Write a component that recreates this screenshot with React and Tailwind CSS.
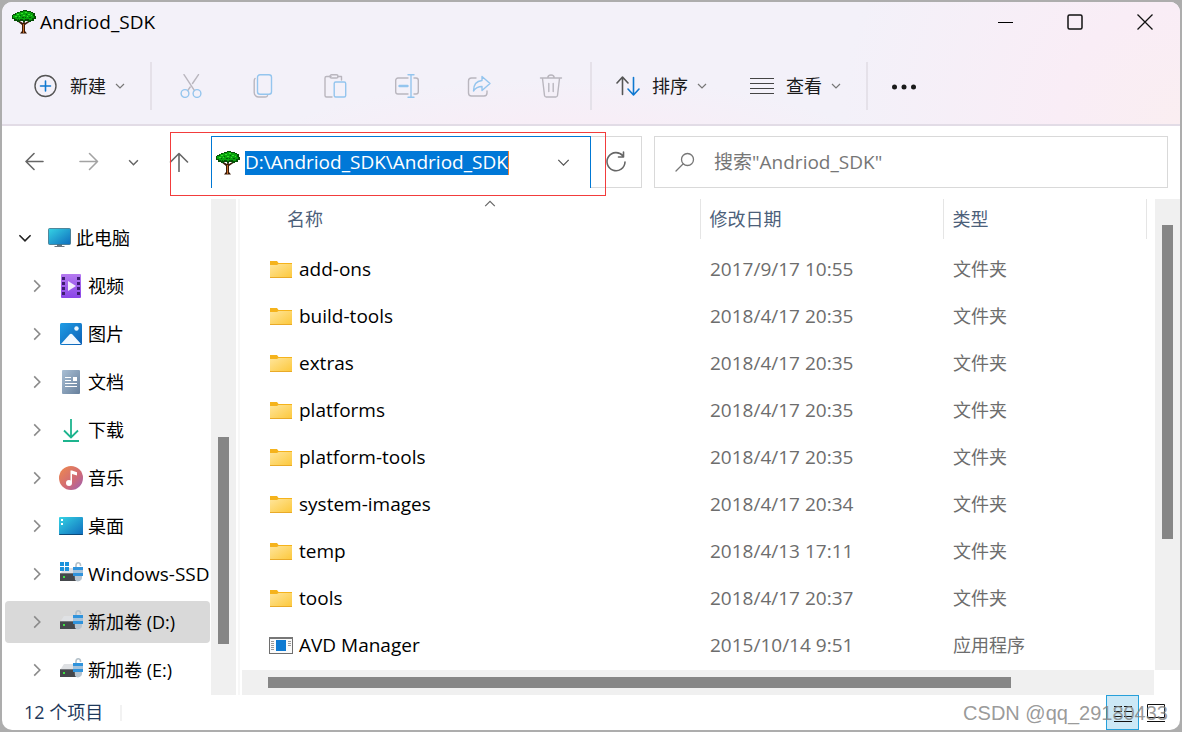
import React, { useState } from 'react'

const tree = [
    { name: '视频', icon: VideoIcon },
    { name: '图片', icon: PictureIcon },
    { name: '文档', icon: DocumentIcon },
    { name: '下载', icon: DownloadIcon },
    { name: '音乐', icon: MusicIcon },
    { name: '桌面', icon: DesktopIcon },
    { name: 'Windows-SSD', icon: SystemDriveIcon, latin: true },
    { name: '新加卷 (D:)', icon: DriveIcon },
    { name: '新加卷 (E:)', icon: DriveIcon },
]

const files = [
    { name: 'add-ons', date: '2017/9/17 10:55', type: '文件夹' },
    { name: 'build-tools', date: '2018/4/17 20:35', type: '文件夹' },
    { name: 'extras', date: '2018/4/17 20:35', type: '文件夹' },
    { name: 'platforms', date: '2018/4/17 20:35', type: '文件夹' },
    { name: 'platform-tools', date: '2018/4/17 20:35', type: '文件夹' },
    { name: 'system-images', date: '2018/4/17 20:34', type: '文件夹' },
    { name: 'temp', date: '2018/4/13 17:11', type: '文件夹' },
    { name: 'tools', date: '2018/4/17 20:37', type: '文件夹' },
    { name: 'AVD Manager', date: '2015/10/14 9:51', type: '应用程序' },
]

/* ---------- Icons ---------- */

function TreeLogo() {
    return (
        <svg width="24" height="24" viewBox="0 0 24 24" className="shrink-0" aria-hidden="true">
            <path d="M5 11l5 4v6l-2 2.5h7L13 21v-6l6-4-1-1-5 3-1-3-1 3-5-3z" fill="#3a1a08" />
            <path d="M11 14h1v9h-1z" fill="#c06a28" />
            <path d="M3 3h2V2h3V1h3V0h4v1h4v1h2v1h2v3h1v3h-2v2h-3v1h-3v-1h-3v1h-2v-1H8v1H5v-1H2V9H0V5h1V4h2z" fill="#054f05" />
            <path d="M4 3h3V2h4V1h4v1h4v1h2v3h1v2h-2v2h-3v-1h-4v1h-2V9H8v1H5V9H3V8H1V5h3z" fill="#07a30c" />
            <path d="M5 4h2v1H5zM9 3h2v1H9zM13 2h2v1h-2zM16 4h2v1h-2zM11 5h2v1h-2zM7 6h1v1H7zM3 6h2v1H3zM15 6h1v1h-1zM19 5h1v1h-1z" fill="#35e02a" />
            <path d="M8 5h1v1H8zM14 4h1v1h-1zM5 7h1v1H5zM10 7h2v1h-2zM13 7h1v1h-1zM17 7h2v1h-2zM20 8h1v1h-1zM6 9h1v1H6zM14 9h1v1h-1z" fill="#045a06" />
        </svg>
    )
}

function Chevron({ size = 10, dir = 'down', color = '#555', width = 1.3 }) {
    const paths = {
        down: 'M1 3l4 4 4-4',
        up: 'M1 6l4-4 4 4',
        right: 'M3 1l4 4-4 4',
    }
    return (
        <svg width={size} height={size} viewBox="0 0 10 10" fill="none" stroke={color} strokeWidth={width * 10 / size} className="shrink-0" aria-hidden="true">
            <path d={paths[dir]} />
        </svg>
    )
}

function Line({ children, size = 24, color = '#b9b6be', width = 1.4 }) {
    return (
        <svg width={size} height={size} viewBox={`0 0 ${size} ${size}`} fill="none" stroke={color} strokeWidth={width} strokeLinecap="round" strokeLinejoin="round" className="shrink-0" aria-hidden="true">
            {children}
        </svg>
    )
}

function CutIcon() {
    return (
        <Line>
            <path d="M5 0.700l10.500 16M19.500 0.700L13.500 9.500M11.200 13l-2.500 3.700" />
            <circle cx="6" cy="19.500" r="3.900" stroke="#94c5ee" />
            <circle cx="18" cy="19.500" r="3.900" stroke="#94c5ee" />
        </Line>
    )
}

function CopyIcon() {
    return (
        <Line>
            <path d="M4 4.500C3.400 5 3.200 6 3.200 7v11.500a4.500 4.500 0 0 0 4.500 4.500h6.500c1.200 0 2-.5 2.300-1.300" />
            <rect x="6.500" y="0.700" width="14" height="19.500" rx="2.500" stroke="#94c5ee" />
        </Line>
    )
}

function PasteIcon() {
    return (
        <Line>
            <path d="M8 2.500H3.500A1.500 1.500 0 0 0 2 4v17.500A1.500 1.500 0 0 0 3.500 23H9M15 2.500h3.500V6" />
            <rect x="7" y="0.700" width="8" height="3.300" rx="1.600" />
            <rect x="11.200" y="8" width="11.500" height="15" rx="1.500" stroke="#94c5ee" />
        </Line>
    )
}

function RenameIcon() {
    return (
        <Line>
            <path d="M13 4H3a2.300 2.300 0 0 0-2.300 2.300v11.400A2.300 2.300 0 0 0 3 20h10M19 4h2a2.300 2.300 0 0 1 2.300 2.300v11.400A2.300 2.300 0 0 1 21 20h-2" />
            <path d="M13 0.700h6M13 23.300h6M16 1v22" stroke="#94c5ee" />
            <path d="M4.500 12h8" stroke="#94c5ee" strokeWidth="2.400" />
        </Line>
    )
}

function ShareIcon() {
    return (
        <Line>
            <path d="M9 4H4.500A3 3 0 0 0 1.500 7v12a3 3 0 0 0 3 3H17a3 3 0 0 0 3-3v-2" />
            <path d="M15 2.500l8 7-8 7v-4c-4 0-6.500 1.500-8.500 4.500 0-6 3-10 8.500-10.500z" stroke="#94c5ee" />
        </Line>
    )
}

function TrashIcon() {
    return (
        <Line>
            <path d="M1.500 4h21M3.500 4.500l2 17A1.800 1.800 0 0 0 7.300 23h9.400a1.800 1.800 0 0 0 1.800-1.500l2-17M8.800 4c0-4 6.400-4 6.400 0M9.800 9.500v8M14.200 9.500v8" />
        </Line>
    )
}

const toolIcons = [
    ['剪切', CutIcon],
    ['复制', CopyIcon],
    ['粘贴', PasteIcon],
    ['重命名', RenameIcon],
    ['共享', ShareIcon],
    ['删除', TrashIcon],
]

function ComputerIcon() {
    return (
        <svg width="24" height="24" viewBox="0 0 24 24" className="shrink-0" aria-hidden="true">
            <defs>
                <linearGradient id="screen" x1="0" y1="0" x2="1" y2="1">
                    <stop offset="0" stopColor="#35d3e4" />
                    <stop offset="1" stopColor="#0f6cbd" />
                </linearGradient>
            </defs>
            <path d="M9 18h5v2H9zM6.500 20h10v1h-10z" fill="#6a7680" />
            <rect x="0.500" y="2.500" width="22" height="16" rx="1" fill="url(#screen)" stroke="#3c7186" strokeWidth="0.800" />
        </svg>
    )
}

function VideoIcon() {
    const holes = [3, 8, 13, 18]
    return (
        <svg width="24" height="24" viewBox="0 0 24 24" className="shrink-0" aria-hidden="true">
            <defs>
                <linearGradient id="film" x1="0" y1="0" x2="0" y2="1">
                    <stop offset="0" stopColor="#b57af0" />
                    <stop offset="1" stopColor="#8a45e8" />
                </linearGradient>
            </defs>
            <rect x="2" width="20" height="24" rx="1" fill="url(#film)" />
            {holes.map((y) => (
                <path key={y} d={`M3 ${y}h3v3H3zM18 ${y}h3v3h-3z`} fill="#3f1d73" />
            ))}
            <path d="M9 7l8 5-8 5z" fill="#f4eefc" />
        </svg>
    )
}

function PictureIcon() {
    return (
        <svg width="24" height="24" viewBox="0 0 24 24" className="shrink-0" aria-hidden="true">
            <defs>
                <linearGradient id="photo" x1="0" y1="0" x2="1" y2="1">
                    <stop offset="0" stopColor="#1f9de6" />
                    <stop offset="1" stopColor="#0c5fb4" />
                </linearGradient>
            </defs>
            <rect x="1" y="1" width="22" height="22" rx="1.500" fill="url(#photo)" />
            <path d="M2 22l8.500-9.500a2 2 0 0 1 3 0L22 22z" fill="#f1f8ff" />
            <circle cx="17.500" cy="6.500" r="2.200" fill="#e8f6ff" />
        </svg>
    )
}

function DocumentIcon() {
    return (
        <svg width="24" height="24" viewBox="0 0 24 24" className="shrink-0" aria-hidden="true">
            <defs>
                <linearGradient id="paper" x1="0" y1="0" x2="1" y2="1">
                    <stop offset="0" stopColor="#a9bfd4" />
                    <stop offset="1" stopColor="#67809c" />
                </linearGradient>
            </defs>
            <rect x="3" width="18" height="24" rx="1" fill="url(#paper)" />
            <path d="M6 7h6v1H6zM6 10h6v1H6zM6 13h12v1H6zM6 16h12v1H6zM14 7h4v4h-4z" fill="#fff" />
        </svg>
    )
}

function DownloadIcon() {
    return (
        <svg width="24" height="24" viewBox="0 0 24 24" fill="none" stroke="#1db48e" strokeWidth="1.800" className="shrink-0" aria-hidden="true">
            <path d="M12 1v19M5 12.500l7 7 7-7M4 23h16" />
        </svg>
    )
}

function MusicIcon() {
    return (
        <svg width="24" height="24" viewBox="0 0 24 24" className="shrink-0" aria-hidden="true">
            <defs>
                <linearGradient id="disc" x1="0" y1="0" x2="1" y2="1">
                    <stop offset="0" stopColor="#f08a4b" />
                    <stop offset="0.600" stopColor="#cf6a78" />
                    <stop offset="1" stopColor="#9a60b8" />
                </linearGradient>
            </defs>
            <circle cx="12" cy="12" r="12" fill="url(#disc)" />
            <circle cx="10" cy="17" r="3" fill="#fff" />
            <path d="M11.500 4.500h1.500l5 1.800v3.200l-5-1.500v9h-1.500z" fill="#fff" />
        </svg>
    )
}

function DesktopIcon() {
    return (
        <svg width="24" height="24" viewBox="0 0 24 24" className="shrink-0" aria-hidden="true">
            <rect x="0" y="3" width="24" height="18" rx="1" fill="url(#screen)" />
            <path d="M0 20h24a1 1 0 0 1-1 1H1a1 1 0 0 1-1-1z" fill="#0b4a7a" />
            <path d="M2 5h2v2H2zM2 9h2v2H2z" fill="#fff" />
        </svg>
    )
}

function DriveIcon({ system }) {
    return (
        <svg width="24" height="24" viewBox="0 0 24 24" className="shrink-0" aria-hidden="true">
            <path d="M5 6h12l3 6H1z" fill="#dfe1e4" />
            <path d="M1 11h18v8H1z" fill="#44474b" />
            <path d="M1 11h18v1H1z" fill="#74777b" />
            <rect x="4" y="14" width="2" height="2" fill="#3ee043" />
            {system && <path d="M1 0h4v4H1zM6 0h4v4H6zM1 5h4v4H1zM6 5h4v4H6z" fill="#1b93dc" />}
            <path d="M17 6V3.500c0-3.500 4.500-3.500 4.500-.5v1" fill="none" stroke="#b4c0c9" strokeWidth="1.600" />
            <path d="M15 5h8v10a4 4 0 0 1-7 3z" fill="#b7c4cf" />
            <path d="M14 5h10v3H14zM14 11h10v3H14z" fill="#2f93dc" />
            <path d="M14 8h10v3H14z" fill="#a5c3dc" />
        </svg>
    )
}

function SystemDriveIcon() {
    return <DriveIcon system />
}

function FolderIcon() {
    return (
        <svg width="24" height="24" viewBox="0 1 24 24" className="shrink-0" aria-hidden="true">
            <defs>
                <linearGradient id="folder" x1="0" y1="0" x2="1" y2="1">
                    <stop offset="0" stopColor="#ffe59a" />
                    <stop offset="1" stopColor="#fcc83c" />
                </linearGradient>
            </defs>
            <path d="M1 4h7l1.500 2H23v4H1z" fill="#f5b31c" />
            <path d="M1 8h7l1.500-1H23v13.500H1z" fill="url(#folder)" />
            <path d="M1 20h22v1H1z" fill="#e9aa28" />
        </svg>
    )
}

function AppIcon() {
    return (
        <svg width="24" height="24" viewBox="0 1 24 24" className="shrink-0" aria-hidden="true">
            <rect x="0.500" y="4.500" width="23" height="16" fill="#fafafa" stroke="#6e6e6e" />
            <path d="M0 4h24v2H0z" fill="#777" />
            <path d="M7 7h10v11H7z" fill="#0f7ad1" />
            <path d="M2 8h3v1H2zM2 10h3v1H2zM2 12h3v1H2zM2 14h3v1H2zM2 16h3v1H2zM19 8h3v1h-3zM19 10h3v1h-3zM19 12h3v1h-3z" fill="#999" />
        </svg>
    )
}

/* ---------- Sections ---------- */

function TitleBar() {
    return (
        <div className="flex h-10 items-center pl-[10px]">
            <TreeLogo />
            <h1 className="ml-1 text-[19px] text-black">Andriod_SDK</h1>
            <div className="ml-auto flex h-full">
                <button aria-label="最小化" className="flex w-[70px] items-center justify-center">
                    <svg width="16" height="16" viewBox="0 0 16 16"><path d="M1 8h15v1H1z" fill="#000" /></svg>
                </button>
                <button aria-label="最大化" className="flex w-[70px] items-center justify-center">
                    <svg width="16" height="16" viewBox="0 0 16 16" fill="none"><rect x="1" y="1" width="14" height="14" rx="1.500" stroke="#111" strokeWidth="1.500" /></svg>
                </button>
                <button aria-label="关闭" className="flex w-[70px] items-center justify-center">
                    <svg width="16" height="16" viewBox="0 0 16 16"><path d="M0.500 0.500l15 15M15.500 0.500l-15 15" stroke="#111" strokeWidth="1.300" /></svg>
                </button>
            </div>
        </div>
    )
}

function Divider() {
    return <div className="h-12 w-[2px] shrink-0 bg-[#e5e1e9]" />
}

function MenuButton({ label, icon }) {
    return (
        <button className="flex w-[91px] shrink-0 items-center">
            {icon}
            <span className="ml-3 text-[18px] text-[#1a1a1a]">{label}</span>
            <span className="ml-auto"><Chevron color="#777" width={1.2} /></span>
        </button>
    )
}

function Toolbar() {
    return (
        <div className="flex h-[82px] items-center pt-[6px] pl-8">
            <MenuButton
                label="新建"
                icon={
                    <Line color="#555">
                        <circle cx="11.500" cy="12" r="10.500" />
                        <path d="M11.500 7v10M6.500 12h10" stroke="#0f78d0" strokeWidth="1.600" />
                    </Line>
                }
            />
            <div className="ml-[25px]"><Divider /></div>
            <div className="mx-[3px] flex">
                {toolIcons.map(([label, Icon]) => (
                    <button key={label} aria-label={label} className="flex h-12 w-[72px] items-center justify-center">
                        <Icon />
                    </button>
                ))}
            </div>
            <Divider />
            <div className="ml-6 flex">
                <MenuButton
                    label="排序"
                    icon={
                        <Line color="#555" width={1.600}>
                            <path d="M6.500 20.500V3.500M1 9l5.500-6L12 9" />
                            <path d="M17.500 3.500v17M12 15l5.500 6 5.500-6" stroke="#0f78d0" />
                        </Line>
                    }
                />
            </div>
            <div className="ml-[43px] flex">
                <MenuButton
                    label="查看"
                    icon={
                        <svg width="24" height="24" viewBox="0 0 24 24" className="shrink-0">
                            <path d="M0 4h24v1H0zM0 9h24v1H0zM0 14h24v1H0zM0 19h24v1H0z" fill="#444" />
                        </svg>
                    }
                />
            </div>
            <div className="ml-[25px]"><Divider /></div>
            <button aria-label="更多" className="ml-6">
                <svg width="24" height="24" viewBox="0 0 24 24" fill="#1a1a1a">
                    <circle cx="2.500" cy="13" r="2.500" />
                    <circle cx="12" cy="13" r="2.500" />
                    <circle cx="21.500" cy="13" r="2.500" />
                </svg>
            </button>
        </div>
    )
}

function AddressRow() {
    const [path, setPath] = useState('D:\\Andriod_SDK\\Andriod_SDK')
    return (
        <div className="flex pt-[10px] pr-3 pb-[11px] pl-[6px]">
            <button aria-label="后退" className="flex w-[54px] items-center justify-center">
                <Line size={20} color="#666" width={1.600}><path d="M18 9.500H1M9 1.500l-8 8 8 8" /></Line>
            </button>
            <button aria-label="前进" className="flex w-[54px] items-center justify-center">
                <Line size={20} color="#a3a3a3" width={1.600}><path d="M1 9.500h17.500M10.500 1.500l8 8-8 8" /></Line>
            </button>
            <button aria-label="最近浏览的位置" className="flex w-[34px] items-center justify-center">
                <Chevron size={11} color="#666" width={1.500} />
            </button>

            {/* Highlighted part of the row: up button and path */}
            <div className="relative flex h-[52px] flex-1">
                <button aria-label="向上" className="flex w-[58px] shrink-0 items-center justify-center">
                    <Line size={20} color="#666" width={1.600}><path d="M10 19.500V1.500M1.500 10L10 1.500l8.500 8.500" /></Line>
                </button>
                <div className="ml-[3px] flex flex-1 items-center border-x border-t border-[#0078d4] pr-5 pl-1">
                    <TreeLogo />
                    <input
                        aria-label="地址"
                        value={path}
                        onChange={(e) => setPath(e.target.value)}
                        className="ml-[5px] h-6 field-sizing-content border-r border-[#f08030] bg-[#0078d7] text-[19px] text-white outline-none"
                    />
                    <button aria-label="以前的位置" className="ml-auto">
                        <Chevron size={13} color="#555" />
                    </button>
                </div>
                <button aria-label="刷新" className="flex w-[51px] shrink-0 items-center justify-center border-y border-r border-[#d9d9d9]">
                    <Line size={22} color="#666" width={1.600}><path d="M18 5A9 9 0 1 0 20 11M18.500 1v5h-5" /></Line>
                </button>
                <div className="pointer-events-none absolute -top-1 right-9 -bottom-2 left-5 border border-[#f23c3c]" />
            </div>

            <div className="ml-3 flex flex-1 items-center border border-[#d9d9d9] pl-5">
                <Line size={20} color="#777" width={1.300}><circle cx="12.500" cy="7.500" r="6" /><path d="M8 12l-7 7" /></Line>
                <input
                    type="search"
                    aria-label="搜索"
                    placeholder={'搜索"Andriod_SDK"'}
                    className="ml-[19px] min-w-0 flex-1 text-[19px] outline-none placeholder:text-[#767676]"
                />
            </div>
        </div>
    )
}

function Sidebar() {
    return (
        <div className="flex w-[234px] shrink-0">
            <nav className="flex min-w-0 flex-1 flex-col gap-[6px] pt-[18px]">
                <button className="flex h-[42px] items-center pl-4 text-[18px] whitespace-nowrap">
                    <Chevron size={14} color="#222" width={1.600} />
                    <span className="mr-1 ml-4"><ComputerIcon /></span>
                    此电脑
                </button>
                {tree.map(({ name, icon: Icon, latin }) => (
                    <button
                        key={name}
                        className={`mr-px ml-[3px] flex h-[42px] items-center rounded-sm pl-[25px] whitespace-nowrap ${latin ? 'text-[19px]' : 'text-[18px]'} ${name === '新加卷 (D:)' ? 'bg-[#d9d9d9]' : ''}`}
                    >
                        <Chevron size={14} dir="right" color="#8a8a8a" width={1.600} />
                        <span className="mr-[5px] ml-[15px]"><Icon /></span>
                        {name}
                    </button>
                ))}
            </nav>
            <div className="w-[25px] shrink-0 bg-[#f0f0f0]">
                <div className="mt-[238px] ml-[7px] h-[207px] w-[11px] bg-[#868686]" />
            </div>
        </div>
    )
}

function FileList() {
    return (
        <div className="ml-[2px] flex min-w-0 flex-1 flex-col border-l-2 border-[#f7f7f7]">
            <div className="flex flex-1">
                <table className="ml-[2px] flex-1 table-fixed self-start text-left">
                    <colgroup>
                        <col />
                        <col className="w-[243px]" />
                        <col className="w-[203px]" />
                        <col className="w-[9px]" />
                    </colgroup>
                    <thead>
                        <tr className="h-10 text-[18px] text-[#4c607a]">
                            <th className="relative border-r border-[#e5e5e5] pl-[45px] font-normal">
                                名称
                                <span className="absolute inset-x-0 top-0 flex justify-center pl-[38px]"><Chevron size={12} dir="up" color="#666" width={1.200} /></span>
                            </th>
                            <th className="border-r border-[#e5e5e5] pl-[9px] font-normal">修改日期</th>
                            <th className="border-r border-[#e5e5e5] pl-[9px] font-normal">类型</th>
                            <th aria-hidden="true" />
                        </tr>
                    </thead>
                    <tbody>
                        <tr aria-hidden="true" className="h-[7px]"><td colSpan={4} /></tr>
                        {files.map((file) => (
                            <tr key={file.name} className="h-[47px] text-[#6d6d6d]">
                                <td className="pl-[27px] text-[19px] text-black">
                                    <div className="flex items-center gap-[6px]">
                                        {file.type === '文件夹' ? <FolderIcon /> : <AppIcon />}
                                        {file.name}
                                    </div>
                                </td>
                                <td className="pl-[10px] text-[19px]">{file.date}</td>
                                <td className="pl-[10px] text-[18px]">{file.type}</td>
                                <td />
                            </tr>
                        ))}
                    </tbody>
                </table>
                <div className="w-[25px] shrink-0 bg-[#f0f0f0]">
                    <div className="mt-[26px] ml-[7px] h-[314px] w-[11px] bg-[#868686]" />
                </div>
            </div>
            <div className="mr-[26px] ml-[2px] h-[25px] bg-[#f0f0f0] pt-[7px] pr-[143px] pl-[26px]">
                <div className="h-[11px] bg-[#868686]" />
            </div>
        </div>
    )
}

function StatusBar() {
    return (
        <div className="relative flex h-[35px] items-center pl-[22px]">
            <span className="text-[18px] text-[#1e395b]">12 个项目</span>
            <div className="ml-[17px] h-4 w-[2px] bg-[#f2f2f2]" />
            <button aria-label="详细信息" className="ml-auto flex h-full w-[33px] items-center justify-center border border-[#26a0da] bg-[#cce8f6]">
                <svg width="18" height="18" viewBox="0 0 18 18"><path d="M0 2h8v1H0zM10 2h8v1h-8zM0 7h8v1H0zM10 7h8v1h-8zM0 12h8v1H0zM10 12h8v1h-8zM0 17h18v1H0z" fill="#111" /></svg>
            </button>
            <button aria-label="大图标" className="mr-[14px] ml-[7px]">
                <svg width="20" height="20" viewBox="0 0 20 20" fill="none" stroke="#111"><path d="M1.500 1.500h17v13h-17zM1 18.500h18" /></svg>
            </button>
            <span className="pointer-events-none absolute right-3 font-['Liberation_Sans',sans-serif] text-[20px] text-[#808080]/80">CSDN @qq_29180433</span>
        </div>
    )
}

const App = () => {
    return (
        <div className="flex min-h-screen bg-[#adadad] p-[2px] font-['Open_Sans','Noto_Sans_CJK_SC',sans-serif] text-black">
            <div className="flex min-w-0 flex-1 flex-col overflow-hidden rounded-[10px] bg-white">
                <header className="border-b-2 border-[#e2dce6] bg-[#f3f1f9] bg-[radial-gradient(circle_at_100%_100%,#faeef1_0,#f9edf6_120px,transparent_340px),radial-gradient(ellipse_at_48%_130%,#faedf5_0,#f9edf6_90px,transparent_320px)]">
                    <TitleBar />
                    <Toolbar />
                </header>
                <AddressRow />
                <div className="flex flex-1">
                    <Sidebar />
                    <FileList />
                </div>
                <StatusBar />
            </div>
        </div>
    )
}

export default App
